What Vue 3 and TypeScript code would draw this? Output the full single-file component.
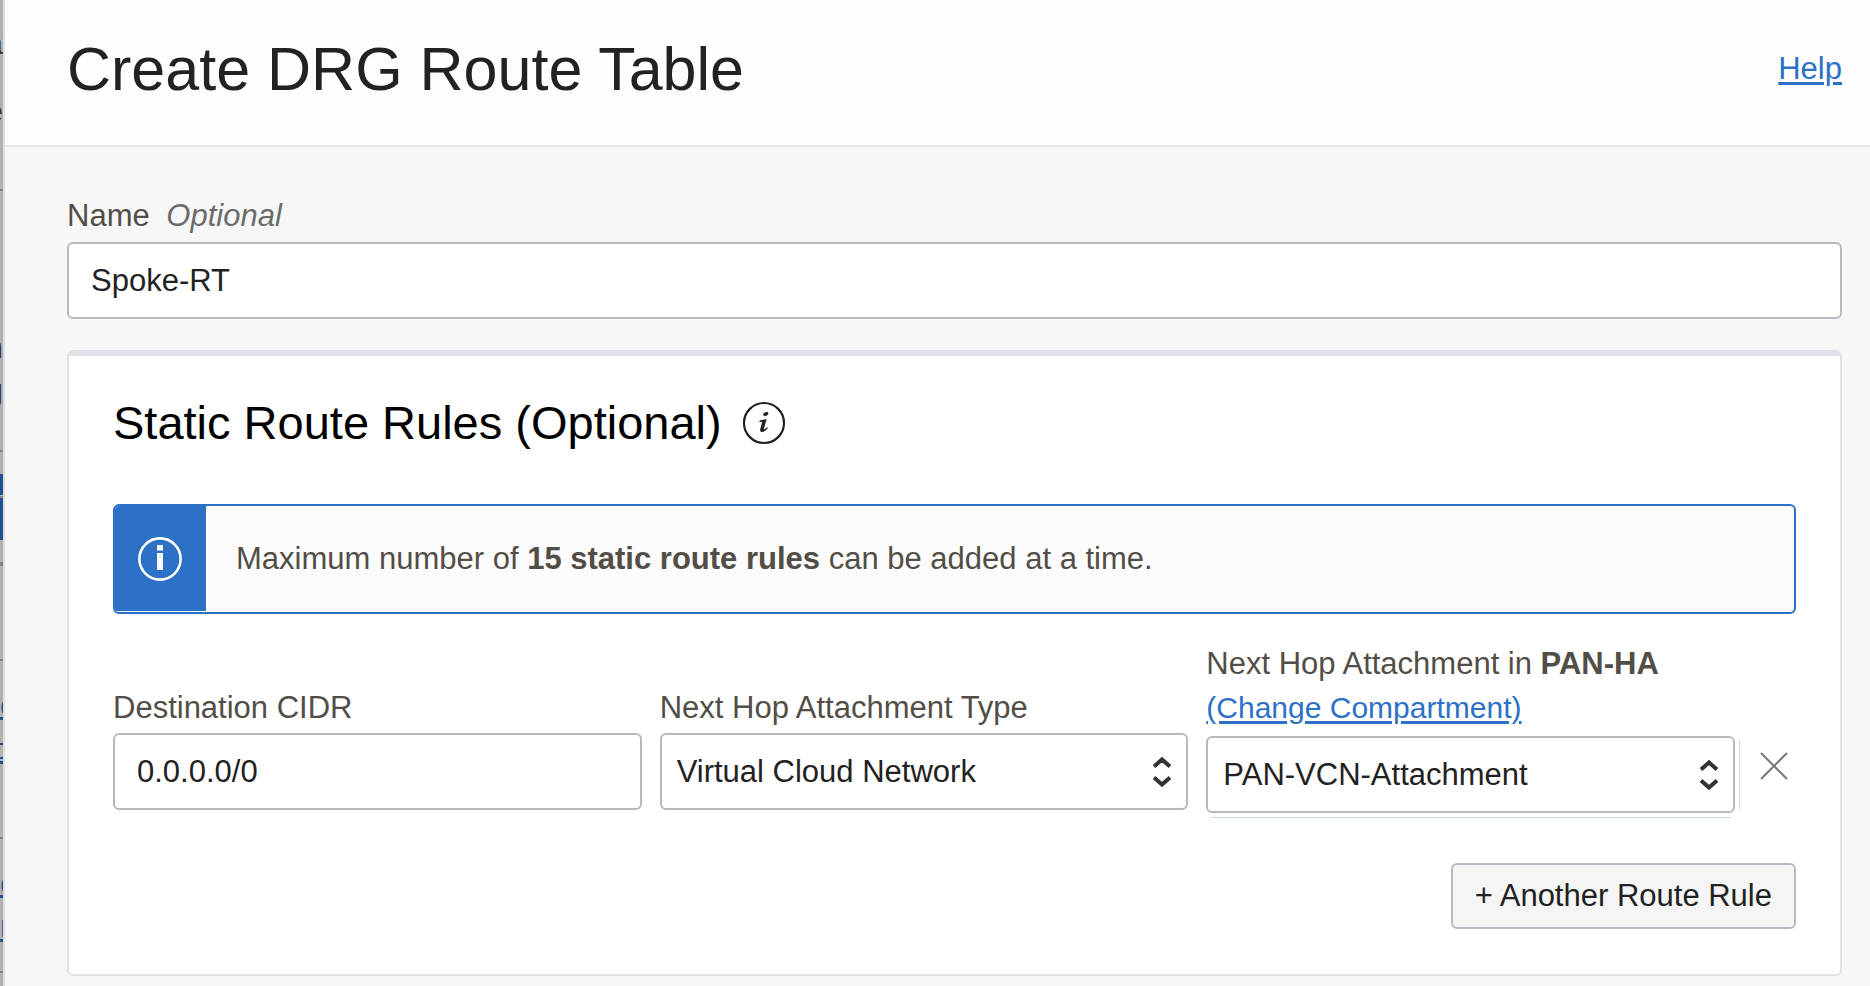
<script setup lang="ts">
import { ref } from 'vue'

interface EdgeItem {
  kind: 'text' | 'rule' | 'fill' | 'link' | 'bar'
  top: number
  height: number
  text?: string
}

const name = ref('Spoke-RT')
const cidr = ref('0.0.0.0/0')
const attachmentType = ref('Virtual Cloud Network')
const attachment = ref('PAN-VCN-Attachment')

// Sliver of the dimmed page that stays visible beside the panel
const edge: EdgeItem[] = [
  { kind: 'text', top: 27, height: 34, text: 'a' },
  { kind: 'text', top: 95, height: 34, text: 'e' },
  { kind: 'rule', top: 189, height: 2 },
  { kind: 'text', top: 331, height: 34, text: 'n' },
  { kind: 'text', top: 374, height: 34, text: 'g' },
  { kind: 'rule', top: 450, height: 2 },
  { kind: 'fill', top: 474, height: 21 },
  { kind: 'rule', top: 496, height: 2 },
  { kind: 'fill', top: 498, height: 42 },
  { kind: 'rule', top: 562, height: 4 },
  { kind: 'rule', top: 659, height: 2 },
  { kind: 'link', top: 689, height: 34, text: 'e' },
  { kind: 'bar', top: 717, height: 3 },
  { kind: 'bar', top: 743, height: 2 },
  { kind: 'bar', top: 757, height: 2 },
  { kind: 'bar', top: 761, height: 3 },
  { kind: 'rule', top: 837, height: 2 },
  { kind: 'link', top: 867, height: 34, text: 'e' },
  { kind: 'bar', top: 895, height: 3 },
  { kind: 'link', top: 910, height: 34, text: 'n' },
  { kind: 'bar', top: 939, height: 3 },
  { kind: 'rule', top: 971, height: 2 },
]
</script>

<template>
  <div class="screen">
    <div class="edge" aria-hidden="true">
      <span
        v-for="(item, i) in edge"
        :key="i"
        class="edge-item"
        :class="'edge-' + item.kind"
        :style="{ top: item.top + 'px', height: item.height + 'px' }"
      >{{ item.text }}</span>
    </div>

    <main class="panel">
      <header class="panel-head">
        <h1>Create DRG Route Table</h1>
        <a href="#help">Help</a>
      </header>

      <form class="panel-body" @submit.prevent>
        <div class="field">
          <label for="name">Name <em>Optional</em></label>
          <input id="name" v-model="name" class="control" type="text" />
        </div>

        <section class="card">
          <h2>
            Static Route Rules (Optional)
            <svg class="hint" viewBox="0 0 44 44" aria-hidden="true">
              <circle cx="22" cy="22" r="20" fill="none" stroke="#222" stroke-width="2.2" />
              <ellipse cx="23.8" cy="13" rx="2.7" ry="1.8" transform="rotate(-14 23.8 13)" fill="#222" />
              <path
                d="M17.6 19.6 L24.6 18 L21.8 28 Q21.9 29 25.2 26.2 L25.9 27 Q22.4 31.4 19.8 31 Q17.6 30.6 18.2 28.2 L20.2 20.8 L17.4 21Z"
                fill="#222"
              />
            </svg>
          </h2>

          <div class="notice">
            <div class="notice-icon">
              <svg viewBox="0 0 44 44" aria-hidden="true">
                <circle cx="22" cy="22" r="20.6" fill="none" stroke="#fff" stroke-width="2.6" />
                <path d="M19 8h6v5.6h-6z M19 16h6v17h-6z" fill="#fff" />
              </svg>
            </div>
            <p>Maximum number of <strong>15 static route rules</strong> can be added at a time.</p>
          </div>

          <div class="rule-row">
            <div class="field">
              <label for="cidr">Destination CIDR</label>
              <input id="cidr" v-model="cidr" class="control" type="text" />
            </div>

            <div class="field">
              <label for="type">Next Hop Attachment Type</label>
              <div class="select-wrap">
                <select id="type" v-model="attachmentType" class="control">
                  <option>Virtual Cloud Network</option>
                </select>
                <svg class="arrows" viewBox="0 0 20 32" aria-hidden="true">
                  <path d="M2 10.5 10 3.5l8 7M2 21.5l8 7 8-7" />
                </svg>
              </div>
            </div>

            <div class="field wide-label">
              <div class="label-lines">
                <label for="attachment">Next Hop Attachment in <strong>PAN-HA</strong></label>
                <a href="#compartment">(Change Compartment)</a>
              </div>
              <div class="select-wrap outlined">
                <select id="attachment" v-model="attachment" class="control">
                  <option>PAN-VCN-Attachment</option>
                </select>
                <svg class="arrows" viewBox="0 0 20 32" aria-hidden="true">
                  <path d="M2 10.5 10 3.5l8 7M2 21.5l8 7 8-7" />
                </svg>
              </div>
            </div>

            <button class="remove" type="button" aria-label="Remove rule">
              <svg viewBox="0 0 28 28" aria-hidden="true">
                <path d="M1 1l26 26M27 1L1 27" />
              </svg>
            </button>
          </div>

          <div class="actions">
            <button class="add" type="button">+ Another Route Rule</button>
          </div>
        </section>
      </form>
    </main>
  </div>
</template>

<style>
body {
  margin: 0;
}
</style>

<style scoped>
.screen {
  display: flex;
  min-height: 100vh;
  font-family: "Liberation Sans", Arial, sans-serif;
  font-size: 31px;
  line-height: 44px;
  color: #222;
  background: #f7f7f7;
}

.screen * {
  box-sizing: border-box;
}

.edge {
  position: relative;
  flex: none;
  width: 5px;
  overflow: hidden;
  background: #b1b1b1;
  border-right: 2px solid #dedede;
}

.edge-item {
  position: absolute;
  right: 0;
  left: 0;
  overflow: hidden;
  line-height: 34px;
  display: flex;
  justify-content: flex-end;
}

.edge-text {
  color: #393632;
}

.edge-link {
  justify-content: flex-start;
  color: #1f5291;
}

.edge-rule {
  background: #828288;
}

.edge-fill,
.edge-bar {
  background: #1f5291;
}

.panel {
  flex: 1;
  min-width: 0;
}

.panel-head {
  display: flex;
  align-items: center;
  justify-content: space-between;
  padding: 33px 28px 40px 62px;
  background: #fdfdfd;
  border-bottom: 2px solid #e5e5e5;
}

h1 {
  margin: 0;
  font-size: 61px;
  line-height: 72px;
  font-weight: 400;
}

a {
  color: #2d71c7;
  text-decoration: underline;
  text-decoration-thickness: 3px;
  text-underline-offset: 3px;
}

.panel-body {
  padding: 47px 28px 10px 62px;
}

.field {
  display: flex;
  flex-direction: column;
  gap: 4px;
  min-width: 0;
}

label {
  color: #524e47;
}

.field em {
  margin-left: 8px;
  color: #6b6b6b;
}

.control {
  display: block;
  width: 100%;
  height: 77px;
  margin: 0;
  padding: 0 22px;
  font: inherit;
  color: #222;
  background: #fff;
  border: 2px solid #b6bac0;
  border-radius: 6px;
  outline: none;
}

select.control {
  padding: 0 48px 0 15px;
  appearance: none;
}

.card {
  margin-top: 31px;
  padding: 44px 44px 45px;
  background: #fff;
  border: 2px solid #e1e2e7;
  border-top-width: 6px;
  border-radius: 6px;
}

h2 {
  display: flex;
  align-items: center;
  gap: 20px;
  margin: 0 0 58px;
  font-size: 47px;
  line-height: 46px;
  font-weight: 400;
  color: #000;
}

.hint {
  flex: none;
  width: 44px;
  height: 44px;
}

.notice {
  display: flex;
  overflow: hidden;
  background: #fcfcfc;
  border: 2px solid #2d71c7;
  border-radius: 6px;
}

.notice-icon {
  display: flex;
  flex: none;
  align-items: center;
  justify-content: center;
  width: 91px;
  padding-right: 1px;
  margin-bottom: 1px;
  background: #2d71c7;
}

.notice-icon svg {
  width: 44px;
  height: 44px;
}

.notice p {
  margin: 0;
  padding: 31px 30px;
  color: #524e47;
}

.rule-row {
  display: grid;
  grid-template-columns: repeat(3, minmax(0, 1fr)) 43px;
  column-gap: 18px;
  align-items: end;
  margin-top: 28px;
}

.rule-row > .field {
  gap: 3px;
  padding-bottom: 3px;
}

.rule-row > .wide-label {
  gap: 6px;
  padding-bottom: 0;
}

.label-lines {
  display: flex;
  flex-direction: column;
  align-items: flex-start;
}

.label-lines a {
  font-size: 30px;
}

.select-wrap {
  position: relative;
}

.outlined::before,
.outlined::after {
  content: "";
  position: absolute;
  background: #cdd8e9;
}

.outlined::before {
  top: 4px;
  right: -5px;
  bottom: 4px;
  width: 1px;
}

.outlined::after {
  right: 4px;
  bottom: -5px;
  left: 4px;
  height: 1px;
}

.arrows {
  position: absolute;
  top: 23px;
  right: 16px;
  width: 20px;
  height: 32px;
  fill: none;
  stroke: #333;
  stroke-width: 4;
  pointer-events: none;
}

.remove {
  display: flex;
  align-items: center;
  justify-content: center;
  height: 94px;
  padding: 0 1px 0 0;
  background: none;
  border: 0;
}

.remove svg {
  width: 28px;
  height: 28px;
  fill: none;
  stroke: #777;
  stroke-width: 2;
}

.actions {
  display: flex;
  justify-content: flex-end;
  margin-top: 50px;
}

.add {
  height: 66px;
  padding: 0 22px;
  font: inherit;
  color: #222;
  background: #f5f5f5;
  border: 2px solid #b6bac0;
  border-radius: 6px;
}
</style>
